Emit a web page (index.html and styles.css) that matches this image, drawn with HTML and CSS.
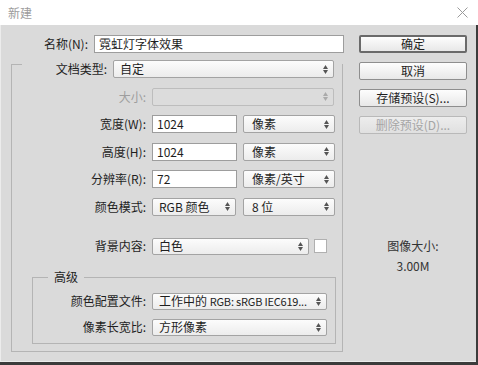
FILE: index.html
```html
<!DOCTYPE html>
<html lang="zh-CN">
<head>
<meta charset="utf-8">
<title>新建</title>
<link rel="stylesheet" href="styles.css">
</head>
<body>
<div class="window">
  <div class="titlebar">
    <span class="title">新建</span>
    <svg class="close" viewBox="0 0 11 11"><path d="M0.5 0.5L10.5 10.5M10.5 0.5L0.5 10.5" stroke="#9a9a9a" stroke-width="1" fill="none"/></svg>
  </div>
  <div class="body">
    <div class="left">
      <div class="row name-row">
        <span class="lbl">名称(N):</span>
        <div class="input name-input">霓虹灯字体效果</div>
      </div>
      <div class="group">
        <div class="row preset-row">
          <span class="lbl">文档类型:</span>
          <div class="select w221"><span>自定</span><svg viewBox="0 0 5 9"><path d="M0 4L2.5 0L5 4Z M0 5L2.5 9L5 5Z" fill="#555"/></svg></div>
        </div>
        <div class="row frow">
          <span class="lbl g-lbl dim">大小:</span>
          <div class="select dis w182"><span></span><svg viewBox="0 0 5 9"><path d="M0 4L2.5 0L5 4Z M0 5L2.5 9L5 5Z" fill="#aaa"/></svg></div>
        </div>
        <div class="row frow">
          <span class="lbl g-lbl">宽度(W):</span>
          <div class="input w85">1024</div>
          <div class="select unit"><span>像素</span><svg viewBox="0 0 5 9"><path d="M0 4L2.5 0L5 4Z M0 5L2.5 9L5 5Z" fill="#555"/></svg></div>
        </div>
        <div class="row frow">
          <span class="lbl g-lbl">高度(H):</span>
          <div class="input w85">1024</div>
          <div class="select unit"><span>像素</span><svg viewBox="0 0 5 9"><path d="M0 4L2.5 0L5 4Z M0 5L2.5 9L5 5Z" fill="#555"/></svg></div>
        </div>
        <div class="row frow">
          <span class="lbl g-lbl">分辨率(R):</span>
          <div class="input w85">72</div>
          <div class="select unit"><span>像素/英寸</span><svg viewBox="0 0 5 9"><path d="M0 4L2.5 0L5 4Z M0 5L2.5 9L5 5Z" fill="#555"/></svg></div>
        </div>
        <div class="row frow">
          <span class="lbl g-lbl">颜色模式:</span>
          <div class="select w84"><span>RGB 颜色</span><svg viewBox="0 0 5 9"><path d="M0 4L2.5 0L5 4Z M0 5L2.5 9L5 5Z" fill="#555"/></svg></div>
          <div class="select unit gap7"><span>8 位</span><svg viewBox="0 0 5 9"><path d="M0 4L2.5 0L5 4Z M0 5L2.5 9L5 5Z" fill="#555"/></svg></div>
        </div>
        <div class="row bg-row">
          <span class="lbl g-lbl">背景内容:</span>
          <div class="select w157"><span>白色</span><svg viewBox="0 0 5 9"><path d="M0 4L2.5 0L5 4Z M0 5L2.5 9L5 5Z" fill="#555"/></svg></div>
          <div class="swatch"></div>
        </div>
        <div class="adv">
          <div class="legend">高级</div>
          <div class="row arow">
            <span class="lbl a-lbl">颜色配置文件:</span>
            <div class="select w175"><span class="clip">工作中的 <span class="narrow">RGB: sRGB IEC619...</span></span><svg viewBox="0 0 5 9"><path d="M0 4L2.5 0L5 4Z M0 5L2.5 9L5 5Z" fill="#555"/></svg></div>
          </div>
          <div class="row arow">
            <span class="lbl a-lbl">像素长宽比:</span>
            <div class="select w175"><span>方形像素</span><svg viewBox="0 0 5 9"><path d="M0 4L2.5 0L5 4Z M0 5L2.5 9L5 5Z" fill="#555"/></svg></div>
          </div>
        </div>
      </div>
    </div>
    <div class="right">
      <div class="btn default">确定</div>
      <div class="btn">取消</div>
      <div class="btn">存储预设(S)...</div>
      <div class="btn disabled">删除预设(D)...</div>
      <div class="info">
        <div class="info-label">图像大小:</div>
        <div class="info-value">3.00M</div>
      </div>
    </div>
  </div>
</div>
</body>
</html>
```

FILE: styles.css
```css
* { box-sizing: border-box; }

body {
  margin: 0;
  background: #ffffff;
  font-family: "Noto Sans CJK SC", "Liberation Sans", sans-serif;
  font-size: 12px;
  color: #1e1e1e;
}

.window {
  width: 478px;
  height: 365px;
  display: flex;
  flex-direction: column;
}

.titlebar {
  height: 25px;
  flex: none;
  display: flex;
  align-items: center;
  justify-content: space-between;
  padding: 0 10px 0 8px;
  background: #ffffff;
}

.title {
  color: #9c9c9c;
  line-height: 14px;
}

.close {
  width: 11px;
  height: 11px;
}

.body {
  flex: 1;
  display: flex;
  background: #dadada;
  border-right: 2px solid #3b3b3b;
  border-bottom: 3px solid #3b3b3b;
  box-shadow: inset 1px 0 0 #ececec, inset 0 -1px 0 #ececec;
}

.left {
  width: 344px;
  flex: none;
  padding-top: 10px;
}

.row {
  display: flex;
  align-items: center;
  height: 18px;
}

.lbl {
  flex: none;
  text-align: right;
  margin-right: 6px;
  line-height: 14px;
  white-space: nowrap;
}

.dim { color: #9e9e9e; }

.name-row .lbl { width: 88px; }

.input {
  height: 18px;
  background: #ffffff;
  border: 1px solid #9d9d9d;
  padding: 0 4px;
  line-height: 16px;
  white-space: nowrap;
}

.name-input { width: 250px; }
.w85 { width: 85px; }

.group {
  margin: 11px 0 0 11px;
  width: 332px;
  border: 1px solid #b4b4b4;
  padding-bottom: 7px;
}

.preset-row {
  margin: -5px 0 0 10px;
  background: #dadada;
}

.preset-row .lbl { width: 85px; }

.g-lbl { width: 134px; }
.a-lbl { width: 113px; }

.frow { margin-top: 9.6px; }

.bg-row {
  margin-top: 22px;
  height: 17px;
}

.select {
  height: 18px;
  display: flex;
  align-items: center;
  justify-content: space-between;
  border: 1px solid #a3a3a3;
  border-radius: 2px;
  background: linear-gradient(#fcfcfc, #ececec);
  padding: 0 5px 0 6px;
  line-height: 16px;
  white-space: nowrap;
  overflow: hidden;
}

.bg-row .select, .arow .select { height: 17px; }

.select svg {
  flex: none;
  width: 5px;
  height: 9px;
  margin-left: 4px;
}

.select.dis {
  background: #dcdcdc;
  border-color: #bdbdbd;
}

.clip {
  overflow: hidden;
  white-space: nowrap;
}

.narrow {
  font-size: 11px;
  letter-spacing: -0.2px;
}

.w221 { width: 221px; }
.w182 { width: 182px; }
.w84 { width: 84px; }
.w157 { width: 157px; }
.w175 { width: 175px; }

.unit {
  width: 92px;
  margin-left: 6px;
  padding-left: 8px;
}

.gap7 { margin-left: 7px; }

.swatch {
  width: 13px;
  height: 14px;
  margin-left: 5px;
  background: #ffffff;
  border: 1px solid #b0b0b0;
}

.adv {
  margin: 22px 0 0 20px;
  width: 304px;
  border: 1px solid #b4b4b4;
  padding-bottom: 7px;
}

.legend {
  width: fit-content;
  margin: -8px 0 0 15px;
  padding: 0 6px;
  background: #dadada;
  line-height: 14px;
}

.arow {
  margin-top: 9px;
  height: 17px;
}

.right {
  width: 108px;
  flex: none;
  margin-left: 15px;
  padding-top: 10px;
}

.btn {
  height: 18px;
  margin-bottom: 9px;
  border: 1px solid #8e8e8e;
  border-radius: 2px;
  background: linear-gradient(#fdfdfd, #e8e8e8);
  text-align: center;
  line-height: 16px;
  color: #1e1e1e;
  white-space: nowrap;
}

.btn.default {
  border: 2px solid #6a6a6a;
  line-height: 14px;
}

.btn.disabled {
  color: #a5a5a5;
  border-color: #b9b9b9;
  background: linear-gradient(#ededed, #e0e0e0);
}

.info {
  margin-top: 105px;
  text-align: center;
  color: #333333;
  line-height: 14px;
}

.info-value {
  margin-top: 6px;
}
```
